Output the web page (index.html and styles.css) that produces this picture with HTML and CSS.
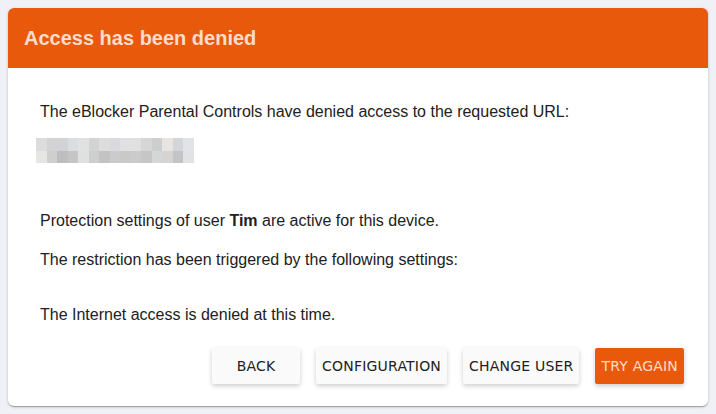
FILE: index.html
```html
<!DOCTYPE html>
<html lang="en">
<head>
<meta charset="utf-8">
<title>Access has been denied</title>
<link rel="stylesheet" href="styles.css">
</head>
<body>
<div class="card">
  <div class="card-header">
    <h1 class="card-title">Access has been denied</h1>
  </div>
  <div class="card-body">
    <p class="intro">The eBlocker Parental Controls have denied access to the requested URL:</p>
    <svg class="url-blur" width="158" height="25" viewBox="0 0 158 25" aria-label="requested URL (hidden)">
      <g shape-rendering="crispEdges">
        <rect x="0" y="0" width="11" height="13" fill="#dcdcdc"/>
        <rect x="10.5" y="0" width="11" height="13" fill="#d3d3d3"/>
        <rect x="21" y="0" width="11" height="13" fill="#d2d3d6"/>
        <rect x="31.5" y="0" width="11" height="13" fill="#dcdde0"/>
        <rect x="42" y="0" width="11" height="13" fill="#e0e1e2"/>
        <rect x="52.5" y="0" width="11" height="13" fill="#d3d3d3"/>
        <rect x="63" y="0" width="11" height="13" fill="#dddddd"/>
        <rect x="73.5" y="0" width="11" height="13" fill="#d9dadd"/>
        <rect x="84" y="0" width="11" height="13" fill="#e0e0e0"/>
        <rect x="94.5" y="0" width="11" height="13" fill="#e0e0e0"/>
        <rect x="105" y="0" width="11" height="13" fill="#d6d6d7"/>
        <rect x="115.5" y="0" width="11" height="13" fill="#cdcfcf"/>
        <rect x="126" y="0" width="11" height="13" fill="#e8e5e0"/>
        <rect x="136.5" y="0" width="11" height="13" fill="#d4d5da"/>
        <rect x="147" y="0" width="11" height="13" fill="#e2e3e6"/>
        <rect x="0" y="12.5" width="11" height="12.5" fill="#e6e6e5"/>
        <rect x="10.5" y="12.5" width="11" height="12.5" fill="#cfcfcf"/>
        <rect x="21" y="12.5" width="11" height="12.5" fill="#bebebe"/>
        <rect x="31.5" y="12.5" width="11" height="12.5" fill="#c5c5c6"/>
        <rect x="42" y="12.5" width="11" height="12.5" fill="#dfe0e0"/>
        <rect x="52.5" y="12.5" width="11" height="12.5" fill="#cdcfcf"/>
        <rect x="63" y="12.5" width="11" height="12.5" fill="#c3c3c3"/>
        <rect x="73.5" y="12.5" width="11" height="12.5" fill="#cbcbcb"/>
        <rect x="84" y="12.5" width="11" height="12.5" fill="#c9c9ca"/>
        <rect x="94.5" y="12.5" width="11" height="12.5" fill="#cccbcb"/>
        <rect x="105" y="12.5" width="11" height="12.5" fill="#c6c6c8"/>
        <rect x="115.5" y="12.5" width="11" height="12.5" fill="#d5d7d7"/>
        <rect x="126" y="12.5" width="11" height="12.5" fill="#d6d4d2"/>
        <rect x="136.5" y="12.5" width="11" height="12.5" fill="#c3c4c6"/>
        <rect x="147" y="12.5" width="11" height="12.5" fill="#e1e2e5"/>
      </g>
    </svg>
    <p class="user">Protection settings of user <strong>Tim</strong> are active for this device.</p>
    <p class="trigger">The restriction has been triggered by the following settings:</p>
    <p class="reason">The Internet access is denied at this time.</p>
  </div>
  <div class="actions">
    <button class="btn" type="button">BACK</button>
    <button class="btn" type="button">CONFIGURATION</button>
    <button class="btn" type="button">CHANGE USER</button>
    <button class="btn btn-primary" type="button">TRY AGAIN</button>
  </div>
</div>
</body>
</html>
```
FILE: styles.css
```css
html, body {
  margin: 0;
  padding: 0;
}

body {
  background: #eff1f6;
  padding: 8px;
  font-family: "Liberation Sans", Arial, sans-serif;
  color: #212121;
}

.card {
  background: #ffffff;
  border-radius: 6px;
  overflow: hidden;
  box-shadow: 0 1px 3px rgba(0, 0, 0, 0.2), 0 1px 1px rgba(0, 0, 0, 0.14), 0 2px 1px -1px rgba(0, 0, 0, 0.12);
}

.card-header {
  background: #e8590c;
  height: 60px;
  display: flex;
  align-items: center;
  padding: 0 16px;
}

.card-title {
  margin: 0;
  font-size: 20px;
  font-weight: bold;
  color: #fcdccc;
  line-height: 24px;
}

.card-body {
  padding: 34px 32px 0;
  font-size: 16px;
  line-height: 20px;
}

.card-body p {
  margin: 0;
}

.url-blur {
  display: block;
  margin: 16px 0 0 -4px;
}

.user {
  margin-top: 48px !important;
}

.trigger {
  margin-top: 19px !important;
}

.reason {
  margin-top: 35px !important;
}

.actions {
  display: flex;
  justify-content: flex-end;
  gap: 16px;
  padding: 23px 24px 22px;
}

.btn {
  font-family: "DejaVu Sans", sans-serif;
  font-size: 14px;
  letter-spacing: 0.2px;
  color: #212121;
  background: #fafafa;
  border: none;
  border-radius: 2px;
  min-width: 88px;
  height: 36px;
  padding: 0 6px;
  box-shadow: 0 2px 5px rgba(0, 0, 0, 0.2);
  cursor: pointer;
}

.btn-primary {
  background: #e8590c;
  color: #fcdccc;
}
```
